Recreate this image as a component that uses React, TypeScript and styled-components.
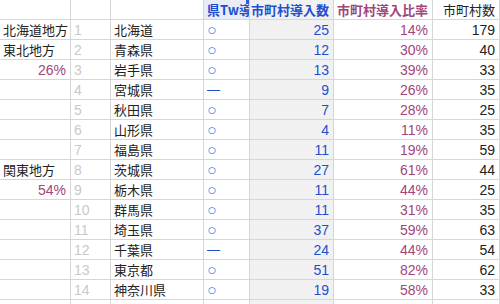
import React from "react";
import styled, { createGlobalStyle, css } from "styled-components";

const GlobalStyle = createGlobalStyle`
    html, body {
        margin:0;
        padding:0;
        background:#fff;
        overflow:hidden;
    }
`;

const Sheet = styled.div`
    display:grid;
    grid-template-columns: 71px 40px 93px 46px 84px 99px 67px;
    grid-auto-rows: 20px;
    width:500px;
    font-family: "Liberation Sans", Arial, "Noto Sans CJK JP", sans-serif;
    font-size:14px;
    color:#222;
`;

type Tone = "plain" | "muted" | "blue" | "rate";

const toneColor: Record<Tone, string> = {
    plain: "#222",
    muted: "#c9c9c9",
    blue: "#1d4fd0",
    rate: "#a2457a",
};

const Cell = styled.div<{ $tone?: Tone; $right?: boolean; $shade?: boolean }>`
    box-sizing:border-box;
    display:flex;
    align-items:center;
    justify-content:${p => (p.$right ? "flex-end" : "flex-start")};
    padding:0 ${p => (p.$right ? "4px" : "0")} 0 3px;
    border-right:1px solid #d6d6d6;
    border-bottom:1px solid #d6d6d6;
    white-space:nowrap;
    overflow:hidden;
    color:${p => toneColor[p.$tone || "plain"]};
    background:${p => (p.$shade ? "#f1f1f1" : "#fff")};
`;

const JpText = styled.span`
    font-family: "Noto Sans CJK JP", sans-serif;
    font-size:13px;
`;

const HeadCell = styled(Cell)<{ $bold?: boolean; $tint?: boolean }>`
    font-family: "Noto Sans CJK JP", sans-serif;
    font-size:13px;
    position:relative;
    ${p => p.$bold && css`font-weight:700;`}
    ${p => p.$tint && css`background:#e7ecf7;`}
`;

// header label that is wider than its column and gets clipped like in the sheet
const Clipped = styled.span`
    display:block;
    min-width:0;
    max-width:100%;
    overflow:hidden;
    white-space:nowrap;
`;

const Marker = styled.span`
    position:absolute;
    top:0;
    right:0;
    width:3px;
    height:4px;
    background:#2f5fd6;
`;

const Circle = styled.span`
    font-family: "DejaVu Sans", sans-serif;
    font-size:9px;
    padding-left:1px;
`;

const Dash = styled.span`
    font-family: "Liberation Sans", sans-serif;
    font-size:13px;
`;

type Row = {
    region?: string;
    share?: string;
    pref: string;
    mark: "o" | "-";
    count: number;
    rate: string;
    total: number;
};

const rows: Row[] = [
    { region: "北海道地方", pref: "北海道", mark: "o", count: 25, rate: "14%", total: 179 },
    { region: "東北地方", pref: "青森県", mark: "o", count: 12, rate: "30%", total: 40 },
    { share: "26%", pref: "岩手県", mark: "o", count: 13, rate: "39%", total: 33 },
    { pref: "宮城県", mark: "-", count: 9, rate: "26%", total: 35 },
    { pref: "秋田県", mark: "o", count: 7, rate: "28%", total: 25 },
    { pref: "山形県", mark: "o", count: 4, rate: "11%", total: 35 },
    { pref: "福島県", mark: "o", count: 11, rate: "19%", total: 59 },
    { region: "関東地方", pref: "茨城県", mark: "o", count: 27, rate: "61%", total: 44 },
    { share: "54%", pref: "栃木県", mark: "o", count: 11, rate: "44%", total: 25 },
    { pref: "群馬県", mark: "o", count: 11, rate: "31%", total: 35 },
    { pref: "埼玉県", mark: "o", count: 37, rate: "59%", total: 63 },
    { pref: "千葉県", mark: "-", count: 24, rate: "44%", total: 54 },
    { pref: "東京都", mark: "o", count: 51, rate: "82%", total: 62 },
    { pref: "神奈川県", mark: "o", count: 19, rate: "58%", total: 33 },
];

function App() {
    return (
        <>
            <GlobalStyle />
            <Sheet>
                <HeadCell />
                <HeadCell />
                <HeadCell />
                <HeadCell $tone="blue" $bold $tint>
                    <Clipped>県Tw導入</Clipped>
                    <Marker />
                </HeadCell>
                <HeadCell $tone="blue" $bold $shade $right>市町村導入数</HeadCell>
                <HeadCell $tone="rate" $bold $right>市町村導入比率</HeadCell>
                <HeadCell $right>市町村数</HeadCell>

                {rows.map((r, i) => (
                    <React.Fragment key={r.pref}>
                        {r.share ? (
                            <Cell $tone="rate" $right>{r.share}</Cell>
                        ) : (
                            <Cell>{r.region && <JpText>{r.region}</JpText>}</Cell>
                        )}
                        <Cell $tone="muted">{i + 1}</Cell>
                        <Cell><JpText>{r.pref}</JpText></Cell>
                        <Cell $tone="blue">
                            {r.mark === "o" ? <Circle>○</Circle> : <Dash>—</Dash>}
                        </Cell>
                        <Cell $tone="blue" $shade $right>{r.count}</Cell>
                        <Cell $tone="rate" $right>{r.rate}</Cell>
                        <Cell $right>{r.total}</Cell>
                    </React.Fragment>
                ))}

                <Cell />
                <Cell />
                <Cell />
                <Cell />
                <Cell $shade />
                <Cell />
                <Cell />
            </Sheet>
        </>
    );
}

export default App;
